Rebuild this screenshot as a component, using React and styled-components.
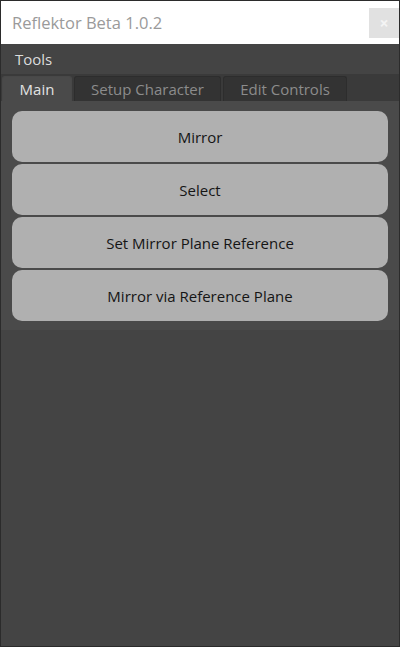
import React from 'react';
import styled, { createGlobalStyle } from 'styled-components';

const Global = createGlobalStyle`
  html, body {
    margin: 0;
    padding: 0;
    background: #444444;
  }
  #root {
    height: 647px;
  }
`;

const Window = styled.div`
  box-sizing: border-box;
  width: 400px;
  height: 647px;
  border: 1px solid #2b2b2b;
  background: #444444;
  display: flex;
  flex-direction: column;
  font-family: "Open Sans", "Noto Sans", sans-serif;
`;

const TitleBar = styled.div`
  height: 43px;
  background: #ffffff;
  display: flex;
  align-items: center;
  justify-content: space-between;
  padding-left: 11px;
`;

const Title = styled.div`
  color: #9a9a9a;
  font-size: 16.5px;
  margin-top: -1px;
`;

const CloseButton = styled.div`
  width: 30px;
  height: 30px;
  margin-top: 1px;
  background: #e1e1e1;
  color: #f4f4f4;
  display: flex;
  align-items: center;
  justify-content: center;
  font-size: 16px;
  font-weight: 700;
`;

const MenuBar = styled.div`
  height: 30px;
  display: flex;
  align-items: center;
  padding-left: 14px;
  color: #dcdcdc;
  font-size: 15px;
  background: #444444;
`;

const TabBar = styled.div`
  height: 27px;
  background: #3a3a3a;
  display: flex;
  align-items: flex-end;
  padding-left: 1px;
  gap: 2px;
`;

const Tab = styled.div`
  box-sizing: border-box;
  height: 25px;
  width: ${p => p.w}px;
  display: flex;
  align-items: center;
  justify-content: center;
  font-size: 15px;
  border-radius: 3px 3px 0 0;
  border: 1px solid ${p => (p.active ? '#484848' : '#2d2d2d')};
  border-bottom: none;
  background: ${p => (p.active ? '#4a4a4a' : '#333333')};
  color: ${p => (p.active ? '#e2e2e2' : '#8c8c8c')};
`;

const Panel = styled.div`
  background: #4a4a4a;
  padding: 10px 11px 9px 11px;
  display: flex;
  flex-direction: column;
  gap: 2px;
`;

const ActionButton = styled.button`
  height: 51px;
  border: none;
  border-radius: 10px;
  background: #b0b0b0;
  color: #151515;
  font-family: "Open Sans", "Noto Sans", sans-serif;
  font-size: 15px;
  padding: 0;
  cursor: pointer;
`;

const Rest = styled.div`
  flex: 1;
  background: #444444;
`;

export default function App() {
  const tabs = [
    { name: 'Main', w: 70, active: true },
    { name: 'Setup Character', w: 147 },
    { name: 'Edit Controls', w: 124 },
  ];
  const actions = ['Mirror', 'Select', 'Set Mirror Plane Reference', 'Mirror via Reference Plane'];

  return (
    <>
      <Global />
      <Window>
        <TitleBar>
          <Title>Reflektor Beta 1.0.2</Title>
          <CloseButton>×</CloseButton>
        </TitleBar>
        <MenuBar>Tools</MenuBar>
        <TabBar>
          {tabs.map(t => (
            <Tab key={t.name} w={t.w} active={t.active}>{t.name}</Tab>
          ))}
        </TabBar>
        <Panel>
          {actions.map(a => (
            <ActionButton key={a}>{a}</ActionButton>
          ))}
        </Panel>
        <Rest />
      </Window>
    </>
  );
}
